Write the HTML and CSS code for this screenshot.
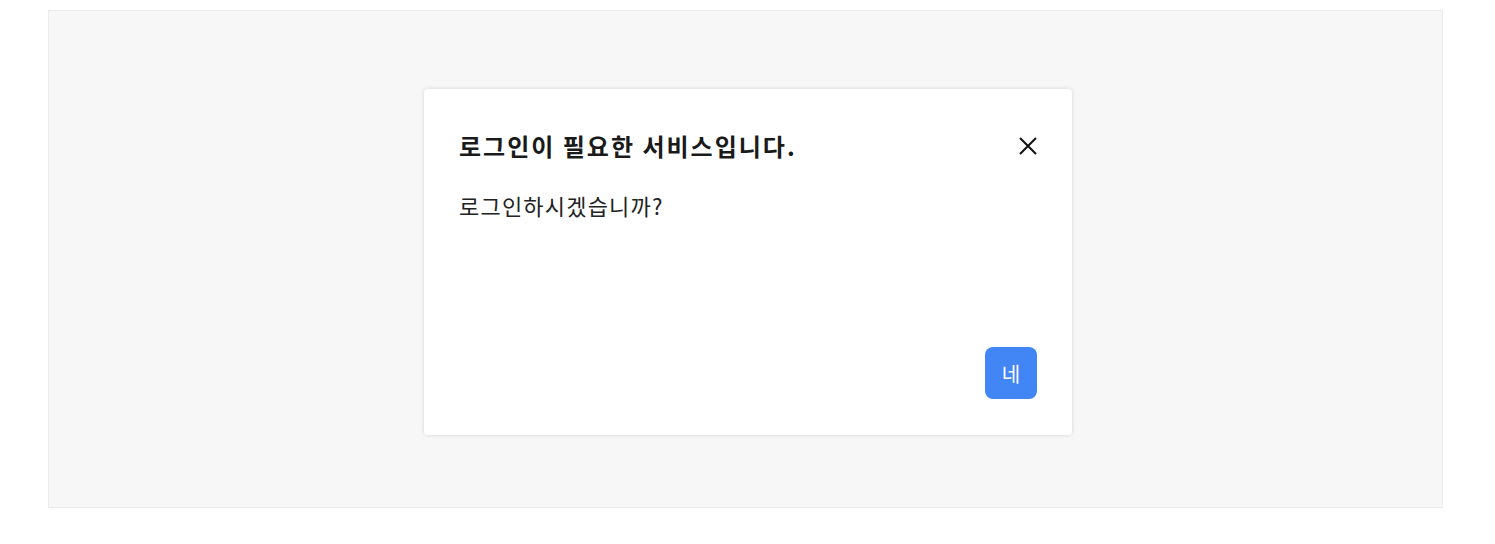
FILE: index.html
```html
<html>
<head>
<meta charset="utf-8">
<link rel="stylesheet" href="styles.css">
</head>
<body>
<div class="stage">
  <div class="modal">
    <div class="modal-head">
      <h2 class="modal-title">로그인이 필요한 서비스입니다.</h2>
      <button class="close-btn" aria-label="닫기">
        <svg width="20" height="20" viewBox="0 0 20 20"><path d="M2 2L18 18M18 2L2 18" stroke="#111" stroke-width="2" fill="none"/></svg>
      </button>
    </div>
    <p class="modal-body">로그인하시겠습니까?</p>
    <div class="modal-foot">
      <button class="ok-btn">네</button>
    </div>
  </div>
</div>
</body>
</html>
```

FILE: styles.css
```css
body {
  margin: 0;
  padding: 10px 52px 0 48px;
  font-family: "Noto Sans CJK KR", "Noto Sans", sans-serif;
  color: #1a1a1a;
}

.stage {
  height: 496px;
  background-color: #f7f7f7;
  border: 1px solid #ebebeb;
  display: flex;
  align-items: center;
  justify-content: center;
}

.modal {
  width: 648px;
  height: 346px;
  box-sizing: border-box;
  margin-left: 5px;
  margin-top: 6px;
  background: white;
  border-radius: 4px;
  box-shadow: 0px 0px 4px 0px rgba(0,0,0,0.15);
  padding: 31px 35px 36px 35px;
  display: flex;
  flex-direction: column;
}

.modal-head {
  display: flex;
  align-items: center;
  justify-content: space-between;
}

.modal-title {
  margin: 0;
  font-size: 24px;
  font-weight: 700;
  letter-spacing: 2px;
  line-height: 52px;
}

.close-btn {
  border: none;
  background: none;
  padding: 0;
  width: 20px;
  height: 20px;
  margin-right: -1px;
  cursor: pointer;
}

.modal-body {
  margin: 0;
  margin-top: 18px;
  font-size: 22px;
  letter-spacing: 1.2px;
  line-height: 30px;
  color: #222;
}

.modal-foot {
  margin-top: auto;
  display: flex;
  justify-content: flex-end;
}

.ok-btn {
  width: 52px;
  height: 52px;
  border: none;
  border-radius: 8px;
  background-color: #4285f4;
  color: white;
  font-family: inherit;
  font-size: 20px;
  cursor: pointer;
}
```
